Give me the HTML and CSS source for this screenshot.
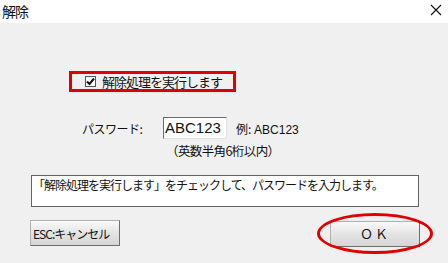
FILE: index.html
```html
<!DOCTYPE html>
<html lang="ja">
<head>
  <meta charset="UTF-8" />
  <title>解除</title>
  <link rel="stylesheet" href="styles.css">
</head>
<body>
  <div class="window">
    <div class="titlebar">
      <span class="title">解除</span>
      <svg class="close" width="12" height="12" viewBox="0 0 12 12">
        <path d="M1 1 L11 11 M11 1 L1 11" stroke="#111" stroke-width="1.1" fill="none"/>
      </svg>
    </div>

    <div class="content">
      <div class="check-row">
        <label class="mark-box">
          <span class="checkbox">
            <svg width="9" height="9" viewBox="0 0 9 9">
              <path d="M1 4.5 L3.5 7 L8 1.5" stroke="#111" stroke-width="2" fill="none"/>
            </svg>
          </span>
          <span class="check-label">解除処理を実行します</span>
        </label>
      </div>

      <div class="pw-row">
        <span class="pw-label">パスワード:</span>
        <span class="pw-input">ABC123</span>
        <span class="example">例: <span class="example-val">ABC123</span></span>
      </div>
      <div class="hint">（英数半角6桁以内）</div>

      <div class="message">「解除処理を実行します」をチェックして、パスワードを入力します。</div>

      <div class="buttons">
        <button class="btn btn-cancel">ESC:キャンセル</button>
        <div class="ok-wrap">
          <button class="btn btn-ok">ＯＫ</button>
          <span class="ring"></span>
        </div>
      </div>
    </div>
  </div>
</body>
</html>
```

FILE: styles.css
```css
:root {
  --bg: #f0f0f0;
  --red: #e10000;
  --font: "Noto Sans CJK JP", "Noto Sans", sans-serif;
}
* {
  box-sizing: border-box;
}
body {
  margin: 0;
  width: 448px;
  height: 263px;
  overflow: hidden;
  font-family: var(--font);
  color: #111;
  background: var(--bg);
}
.window {
  height: 263px;
  display: flex;
  flex-direction: column;
}
.titlebar {
  height: 23px;
  background: #fff;
  display: flex;
  align-items: center;
  justify-content: space-between;
  padding: 0 6px 2px 2px;
}
.title {
  font-size: 14px;
  letter-spacing: -1px;
}
.close {
  margin-top: -2px;
}
.content {
  flex: 1;
  padding-top: 48px;
}
.check-row {
  display: flex;
  padding-left: 69px;
}
.mark-box {
  display: flex;
  align-items: center;
  height: 21px;
  width: 167px;
  border: 3px solid var(--red);
  padding-left: 13px;
}
.checkbox {
  width: 11px;
  height: 11px;
  background: #fff;
  border: 1px solid #555;
  display: flex;
  align-items: center;
  justify-content: center;
  margin-right: 6px;
}
.check-label {
  font-size: 13px;
  letter-spacing: -1px;
  line-height: 15px;
}
.pw-row {
  margin-top: 25px;
  padding-left: 82px;
  display: flex;
  align-items: center;
  height: 22px;
}
.pw-label {
  font-size: 12px;
  letter-spacing: -0.5px;
  width: 81px;
}
.pw-input {
  width: 64px;
  height: 22px;
  background: #fff;
  border: 1px solid #fff;
  border-top-color: #6a6a6a;
  border-left-color: #6a6a6a;
  border-right-color: #e3e3e3;
  border-bottom-color: #e3e3e3;
  font-family: "Liberation Sans", Arial, sans-serif;
  font-size: 15px;
  line-height: 20px;
  padding-left: 1px;
}
.example {
  margin-left: 9px;
  font-size: 12px;
}
.example-val {
  font-family: "Liberation Sans", Arial, sans-serif;
  font-size: 12px;
}
.hint {
  margin-top: 4px;
  padding-left: 166px;
  font-size: 12.5px;
  letter-spacing: -0.6px;
  line-height: 16px;
}
.message {
  margin: 16px 29px 0 31px;
  height: 32px;
  background: #fff;
  border: 1px solid #646464;
  font-size: 12px;
  letter-spacing: -1px;
  line-height: 15px;
  padding: 1px 0 0 1px;
}
.buttons {
  margin-top: 13px;
  display: flex;
  justify-content: space-between;
  padding: 0 28px 0 30px;
}
.btn {
  height: 26px;
  width: 90px;
  font-family: var(--font);
  font-size: 12px;
  color: #111;
  background: linear-gradient(#fafafa, #e4e4e4 50%, #d6d6d6);
  border: 1px solid #b0b0b0;
  border-right-color: #6e6e6e;
  border-bottom-color: #6e6e6e;
  padding: 0;
}
.btn-cancel {
  text-align: left;
  padding-left: 2px;
  letter-spacing: -1px;
}
.btn-ok {
  letter-spacing: 2px;
  font-size: 13px;
}
.ok-wrap {
  position: relative;
}
.ring {
  position: absolute;
  left: -13px;
  top: -7px;
  width: 116px;
  height: 41px;
  border: 3px solid var(--red);
  border-radius: 50%;
  pointer-events: none;
}
```
